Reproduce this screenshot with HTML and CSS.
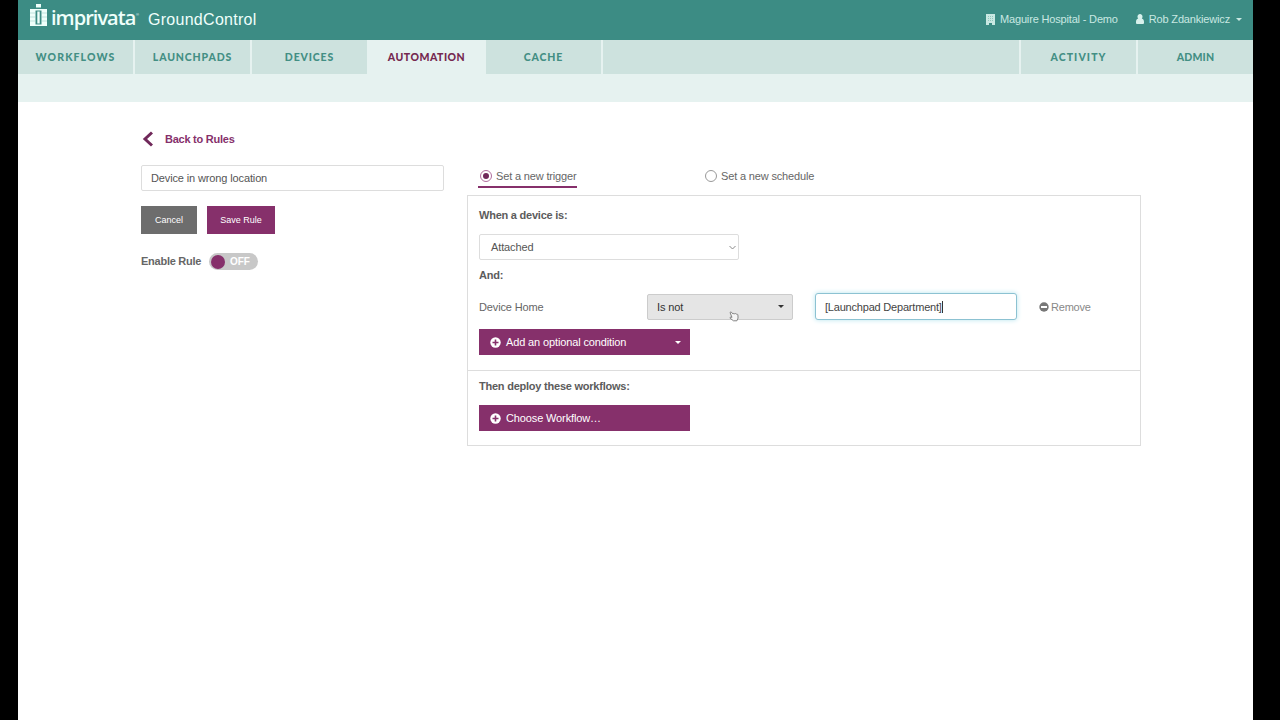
FILE: index.html
```html
<!DOCTYPE html>
<html lang="en">
  <head>
    <meta charset="UTF-8" />
    <meta name="viewport" content="width=device-width, initial-scale=1.0" />
    <title>GroundControl</title>
    <link rel="stylesheet" href="styles.css">
  </head>
  <body>
    <div class="page">
      <header class="header">
        <div class="brand">
          <svg class="logo-mark" width="17" height="22" viewBox="0 0 17 22">
            <path fill="#effffb" d="M6 0h5v3.500H6zM0 5h5.500v17H0zM11.500 5H17v17h-5.500zM5 5h7v1.500H5zM5 20.500h7V22H5zM7.300 7.500h2.400v12H7.300z" />
            <path stroke="#8fc4bc" stroke-width=".5" d="M0 9h5.500M0 13h5.500M0 17h5.500M11.500 9H17M11.500 13H17M11.500 17H17" />
          </svg>
          <span class="logo-text">imprivata</span><span class="reg">®</span>
          <span class="product">GroundControl</span>
        </div>
        <div class="account">
          <svg width="9" height="11" viewBox="0 0 9 11">
            <path fill="#c9e8e2" d="M0 0h9v11H6V9H3v2H0z" />
            <path stroke="#82bcb3" stroke-width=".8" stroke-dasharray="1 1" d="M2 2.500h5M2 4.500h5M2 6.500h5" />
          </svg>
          <span class="org">Maguire Hospital - Demo</span>
          <svg width="8" height="10" viewBox="0 0 8 10">
            <path fill="#d8f1ec" d="M4 0a2.400 2.600 0 0 1 1.800 4.400C7.400 4.800 8 6 8 8v1q0 1-1 1H1q-1 0-1-1V8C0 6 .6 4.800 2.200 4.400A2.400 2.600 0 0 1 4 0z" />
          </svg>
          <span class="user">Rob Zdankiewicz</span>
          <span class="caret"></span>
        </div>
      </header>

      <nav class="nav">
        <a class="tab workflows">WORKFLOWS</a>
        <a class="tab">LAUNCHPADS</a>
        <a class="tab">DEVICES</a>
        <a class="tab active">AUTOMATION</a>
        <a class="tab">CACHE</a>
        <span class="spacer"></span>
        <a class="tab activity">ACTIVITY</a>
        <a class="tab last">ADMIN</a>
      </nav>
      <div class="subnav"></div>

      <main class="content">
        <section class="rule">
          <a class="back">
            <svg width="12" height="16" viewBox="0 0 12 16">
              <path fill="none" stroke="#70285a" stroke-width="3" d="M11 1.500 4 8l7 6.500" />
            </svg>
            <span>Back to Rules</span>
          </a>
          <div class="input name">Device in wrong location</div>
          <div class="buttons">
            <button class="btn cancel">Cancel</button>
            <button class="btn save">Save Rule</button>
          </div>
          <div class="enable">
            <span class="enable-label">Enable Rule</span>
            <span class="switch"><i class="knob"></i><b>OFF</b></span>
          </div>
        </section>

        <section class="setup">
          <div class="modes">
            <label class="mode selected"><i class="radio on"></i><span>Set a new trigger</span></label>
            <label class="mode"><i class="radio"></i><span>Set a new schedule</span></label>
          </div>

          <div class="panel">
            <div class="conditions">
              <h4 class="when">When a device is:</h4>
              <div class="input event">
                <span>Attached</span>
                <svg width="7" height="5" viewBox="0 0 7 5">
                  <path fill="none" stroke="#8a8a8a" d="M.5 1l3 3 3-3" />
                </svg>
              </div>
              <h4 class="and">And:</h4>
              <div class="condition">
                <span class="field">Device Home</span>
                <div class="operator">
                  <span>Is not</span>
                  <span class="caret"></span>
                  <svg class="pointer" width="10" height="11" viewBox="0 0 10 11">
                    <path fill="#f5f5f5" stroke="#777" stroke-width=".9" d="M1 1.500q.8-1 1.800 0L4 3q.8-1 1.700-.2 1-.6 1.700.3 1-.3 1.500.7.800 3.500-1 6H4.500L1.200 7.300Q.6 6 2 6l1 .4z" />
                  </svg>
                </div>
                <div class="input value"><span>[Launchpad Department]</span><i class="cursor"></i></div>
                <a class="remove">
                  <svg width="10" height="10" viewBox="0 0 10 10">
                    <circle cx="5" cy="5" r="4.700" fill="#777" />
                    <path fill="#fff" d="M2 4h6v2H2z" />
                  </svg>
                  <span>Remove</span>
                </a>
              </div>
              <button class="add add-condition">
                <svg width="11" height="11" viewBox="0 0 11 11">
                  <circle cx="5.500" cy="5.500" r="5.200" fill="#fff" />
                  <path fill="#86306b" d="M4.700 2.500h1.600v2.200h2.200v1.600H6.300v2.200H4.700V6.300H2.500V4.700h2.200z" />
                </svg>
                <span>Add an optional condition</span>
                <span class="caret"></span>
              </button>
            </div>

            <div class="deploy">
              <h4 class="then">Then deploy these workflows:</h4>
              <button class="add choose">
                <svg width="11" height="11" viewBox="0 0 11 11">
                  <circle cx="5.500" cy="5.500" r="5.200" fill="#fff" />
                  <path fill="#86306b" d="M4.700 2.500h1.600v2.200h2.200v1.600H6.300v2.200H4.700V6.300H2.500V4.700h2.200z" />
                </svg>
                <span>Choose Workflow…</span>
              </button>
            </div>
          </div>
        </section>
      </main>
    </div>
  </body>
</html>
```
FILE: styles.css
```css
* {
  box-sizing: border-box;
}
body {
  margin: 0;
  background-color: #000;
  font-family: "Liberation Sans", Arial, sans-serif;
  font-size: 11px;
  letter-spacing: -0.13px;
  color: #666;
}
svg {
  display: block;
  flex: none;
}
span {
  white-space: nowrap;
}
h4 {
  margin: 0;
  font-size: 11px;
  line-height: 14px;
  letter-spacing: -0.23px;
  color: #5c5c5c;
}
button {
  border: none;
  padding: 0;
  font-family: inherit;
  letter-spacing: inherit;
  color: #fff;
}
.page {
  width: 1235px;
  height: 720px;
  margin-left: 18px;
  background-color: #fff;
  overflow: hidden;
}

/* header */
.header {
  display: flex;
  justify-content: space-between;
  height: 40px;
  padding: 0 11px 0 12px;
  background-color: #3c8c84;
}
.brand {
  display: flex;
  align-items: flex-start;
  color: #effffb;
}
.logo-mark {
  margin-top: 4px;
}
.logo-text {
  margin: 4px 0 0 4px;
  width: 85px;
  font-family: "Open Sans", sans-serif;
  font-weight: 600;
  font-size: 20px;
  line-height: 28px;
  letter-spacing: -0.98px;
}
.reg {
  width: 3px;
  margin-top: 12px;
  font-size: 4px;
}
.product {
  margin: 9px 0 0 9px;
  font-size: 16px;
  line-height: 22px;
  letter-spacing: 0.28px;
}
.account {
  display: flex;
  align-items: center;
  height: 38px;
  letter-spacing: -0.17px;
  color: #c9e8e2;
}
.org {
  margin: 0 18px 0 5px;
}
.user {
  margin: 0 6px 0 5px;
}
.caret {
  flex: none;
  border: 3px solid transparent;
  border-top-color: currentColor;
  border-bottom: 0;
}

/* navigation */
.nav {
  display: flex;
  height: 34px;
  background-color: #cde2de;
}
.tab {
  width: 117px;
  border-right: 2px solid #e6f2f0;
  font-family: Lato, sans-serif;
  font-weight: 900;
  font-size: 10.5px;
  line-height: 34px;
  letter-spacing: 0.85px;
  text-align: center;
  color: #438f84;
}
.workflows,
.activity {
  letter-spacing: 1.1px;
}
.active {
  background-color: #e6f2f0;
  letter-spacing: 0.5px;
  color: #75284f;
}
.spacer {
  flex: 1;
  border-right: 2px solid #e6f2f0;
}
.last {
  width: 115px;
  border-right: none;
  letter-spacing: 0.2px;
}
.subnav {
  height: 28px;
  background-color: #e6f2f0;
}

/* left column */
.content {
  display: flex;
  padding-left: 123px;
}
.rule {
  width: 303px;
  margin-right: 23px;
  padding-top: 29px;
}
.back {
  display: flex;
  align-items: center;
  gap: 12px;
  height: 16px;
  font-weight: bold;
  letter-spacing: -0.25px;
  color: #86306b;
}
.input {
  display: flex;
  align-items: center;
  height: 26px;
  border: 1px solid #ddd;
  border-radius: 2px;
  background-color: #fff;
  color: #555;
}
.name {
  margin-top: 18px;
  padding-left: 9px;
}
.buttons {
  display: flex;
  gap: 10px;
  margin-top: 15px;
}
.btn {
  height: 28px;
  font-size: 9px;
  letter-spacing: 0;
}
.cancel {
  width: 56px;
  background-color: #6d6d6d;
}
.save {
  width: 68px;
  background-color: #86306b;
}
.enable {
  display: flex;
  align-items: center;
  margin-top: 19px;
  font-weight: bold;
}
.enable-label {
  width: 68px;
  padding-bottom: 1px;
  letter-spacing: -0.25px;
}
.switch {
  display: flex;
  align-items: center;
  width: 49px;
  height: 17px;
  padding-left: 2px;
  border-radius: 9px;
  background-color: #c8c8c8;
  color: #fff;
  font-size: 10px;
}
.knob {
  width: 14px;
  height: 14px;
  margin-right: 5px;
  border-radius: 50%;
  background-color: #86306b;
}

/* trigger panel */
.setup {
  width: 674px;
  padding-top: 66px;
}
.modes {
  display: flex;
  gap: 128px;
  height: 27px;
  padding-left: 11px;
}
.mode {
  display: flex;
  align-items: center;
  height: 20px;
  padding-bottom: 4px;
  letter-spacing: -0.16px;
}
.selected {
  width: 99px;
  padding: 0 0 2px 2px;
  border-bottom: 2px solid #86306b;
}
.radio {
  display: flex;
  flex: none;
  width: 12px;
  height: 12px;
  margin-right: 4px;
  border: 1px solid #999;
  border-radius: 50%;
}
.on {
  border-color: #b06d9d;
}
.on::after {
  content: "";
  width: 6px;
  height: 6px;
  margin: 2px;
  border-radius: 50%;
  background-color: #70285a;
}
.panel {
  height: 251px;
  border: 1px solid #ddd;
}
.conditions {
  height: 175px;
  padding: 12px 0 0 11px;
  border-bottom: 1px solid #ddd;
}
.event {
  width: 260px;
  justify-content: space-between;
  margin-top: 12px;
  padding: 0 2px 0 11px;
}
.and {
  margin-top: 8px;
}
.condition {
  display: flex;
  align-items: center;
  margin-top: 11px;
}
.field {
  width: 168px;
}
.operator {
  position: relative;
  display: flex;
  align-items: center;
  justify-content: space-between;
  width: 146px;
  height: 26px;
  padding: 0 8px 0 9px;
  border: 1px solid #ccc;
  border-radius: 2px;
  background-color: #e5e5e5;
  color: #333;
}
.pointer {
  position: absolute;
  left: 81px;
  top: 16px;
}
.value {
  width: 202px;
  height: 27px;
  margin: 0 22px;
  padding-left: 9px;
  border-color: #8cc2d2;
  border-radius: 3px;
  box-shadow: 0 0 5px #b6e4ee;
  letter-spacing: -0.2px;
  color: #444;
}
.cursor {
  width: 1px;
  height: 12px;
  background-color: #333;
}
.remove {
  display: flex;
  align-items: center;
  gap: 2px;
  letter-spacing: -0.2px;
  color: #888;
}
.add {
  display: flex;
  align-items: center;
  gap: 5px;
  width: 211px;
  height: 26px;
  padding: 0 9px 0 11px;
  background-color: #86306b;
  font-size: 11px;
}
.add .caret {
  margin-left: auto;
}
.add-condition {
  margin-top: 9px;
}
.deploy {
  padding: 8px 0 0 11px;
}
.choose {
  margin-top: 12px;
}
```
